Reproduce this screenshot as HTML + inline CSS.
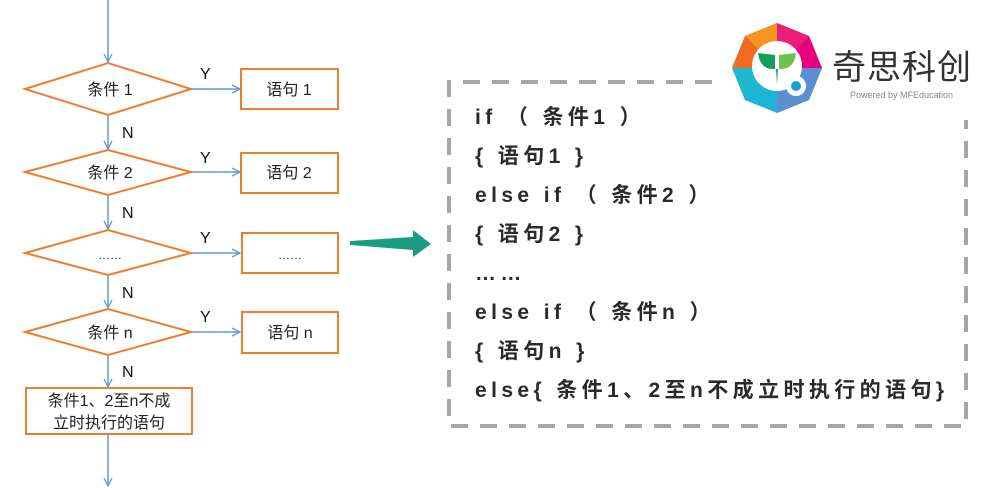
<!DOCTYPE html>
<html><head><meta charset="utf-8"><style>
html,body{margin:0;padding:0;background:#fff;width:1000px;height:488px;overflow:hidden;position:relative}
.code{position:absolute;left:475px;font-family:"Liberation Sans","Noto Sans CJK SC",sans-serif;font-size:21px;font-weight:bold;color:#2a2a2a;letter-spacing:4.4px;line-height:20px;white-space:pre}
</style></head><body>
<svg width="1000" height="488" style="position:absolute;left:0;top:0" font-family="Liberation Sans, Noto Sans CJK SC, sans-serif">
<defs><marker id="a" markerWidth="10" markerHeight="10" refX="9" refY="5" orient="auto" markerUnits="userSpaceOnUse"><path d="M1,1 L9,5 L1,9" fill="none" stroke="#5b9bd5" stroke-width="1.3"/></marker></defs>
<g stroke="#5b9bd5" stroke-width="1.5" fill="none">
<line x1="108" y1="0" x2="108" y2="62" marker-end="url(#a)"/>
<line x1="108" y1="115" x2="108" y2="149" marker-end="url(#a)"/>
<line x1="108" y1="195" x2="108" y2="229" marker-end="url(#a)"/>
<line x1="108" y1="275" x2="108" y2="308" marker-end="url(#a)"/>
<line x1="108" y1="355" x2="108" y2="387" marker-end="url(#a)"/>
<line x1="108" y1="434" x2="108" y2="486" marker-end="url(#a)"/>
<line x1="190" y1="89" x2="240" y2="89" marker-end="url(#a)"/>
<line x1="190" y1="172" x2="240" y2="172" marker-end="url(#a)"/>
<line x1="190" y1="253" x2="240" y2="253" marker-end="url(#a)"/>
<line x1="190" y1="332" x2="240" y2="332" marker-end="url(#a)"/>
</g>
<g stroke="#ed7d31" stroke-width="2" fill="#fff">
<polygon points="25,89 108,63 191,89 108,115"/>
<polygon points="25,172 108,150 191,172 108,195"/>
<polygon points="25,253 108,230 191,253 108,275"/>
<polygon points="25,332 108,309 191,332 108,355"/>
<rect x="241" y="69" width="97" height="40"/>
<rect x="241" y="153" width="97" height="40"/>
<rect x="242" y="233" width="96" height="40"/>
<rect x="242" y="312" width="96" height="41"/>
<rect x="26" y="388" width="166" height="46"/>
</g>
<g font-size="16" fill="#222" text-anchor="middle">
<text x="110" y="95">条件 1</text><text x="289" y="95">语句 1</text>
<text x="110" y="178">条件 2</text><text x="289" y="178">语句 2</text>
<text x="110" y="259" font-size="12">……</text><text x="290" y="259" font-size="12">……</text>
<text x="110" y="338">条件 n</text><text x="290" y="338">语句 n</text>
<text x="109" y="406">条件1、2至n不成</text><text x="109" y="428">立时执行的语句</text>
</g>
<g font-size="16" fill="#111">
<text x="200" y="79">Y</text><text x="200" y="163">Y</text><text x="200" y="243">Y</text><text x="200" y="322">Y</text>
<text x="122" y="138">N</text><text x="122" y="218">N</text><text x="122" y="298">N</text><text x="122" y="377">N</text>
</g>
<polygon points="350,241 413,237 413,230 431,244 413,257 413,250 350,245" fill="#1a9c82"/>
<path d="M712,82 L449,82 L449,426 L966,426 L966,120" fill="none" stroke="#a6a6a6" stroke-width="4" stroke-dasharray="17,12"/>
<g>
<polygon points="777,23 809,36 822,68 809,100 777,113 745,100 732,68 745,36" fill="#1fb3d6"/>
<polygon points="777,23 809,36 777,68 745,36" fill="#f7941d"/>
<polygon points="809,36 822,68 777,68" fill="#e6007e"/>
<polygon points="777,23 809,36 777,68" fill="#ec1c7a"/>
<polygon points="822,68 809,100 777,113 777,68" fill="#5b8fd0"/>
<polygon points="745,36 732,68 777,68" fill="#f26b21"/>
<polygon points="732,68 745,100 777,68" fill="#1eb8d0"/>
<circle cx="777" cy="66" r="25" fill="#fff"/>
<circle cx="796" cy="86" r="10" fill="#fff"/>
<circle cx="796" cy="86" r="5" fill="#1aa0d8"/>
<path d="M758,53 L775,55 L775,69 Q760,70 758,53Z" fill="#12a05a"/>
<path d="M796,53 L779,55 L779,69 Q794,70 796,53Z" fill="#6cc24a"/>
<path d="M776,69 L778,69 L777,84Z" fill="#12a05a"/>
</g>
<text x="832" y="79" font-size="34" fill="#333" letter-spacing="1">奇思科创</text>
<text x="850" y="98" font-size="9" fill="#888">Powered by MFEducation</text>
</svg>
<div class="code" style="top:108px">if （ 条件1 ）</div>
<div class="code" style="top:147px">{ 语句1 }</div>
<div class="code" style="top:186px">else if （ 条件2 ）</div>
<div class="code" style="top:225px">{ 语句2 }</div>
<div class="code" style="top:264px">……</div>
<div class="code" style="top:303px">else if （ 条件n ）</div>
<div class="code" style="top:342px">{ 语句n }</div>
<div class="code" style="top:381px">else{ 条件1、2至n不成立时执行的语句}</div>
</body></html>
